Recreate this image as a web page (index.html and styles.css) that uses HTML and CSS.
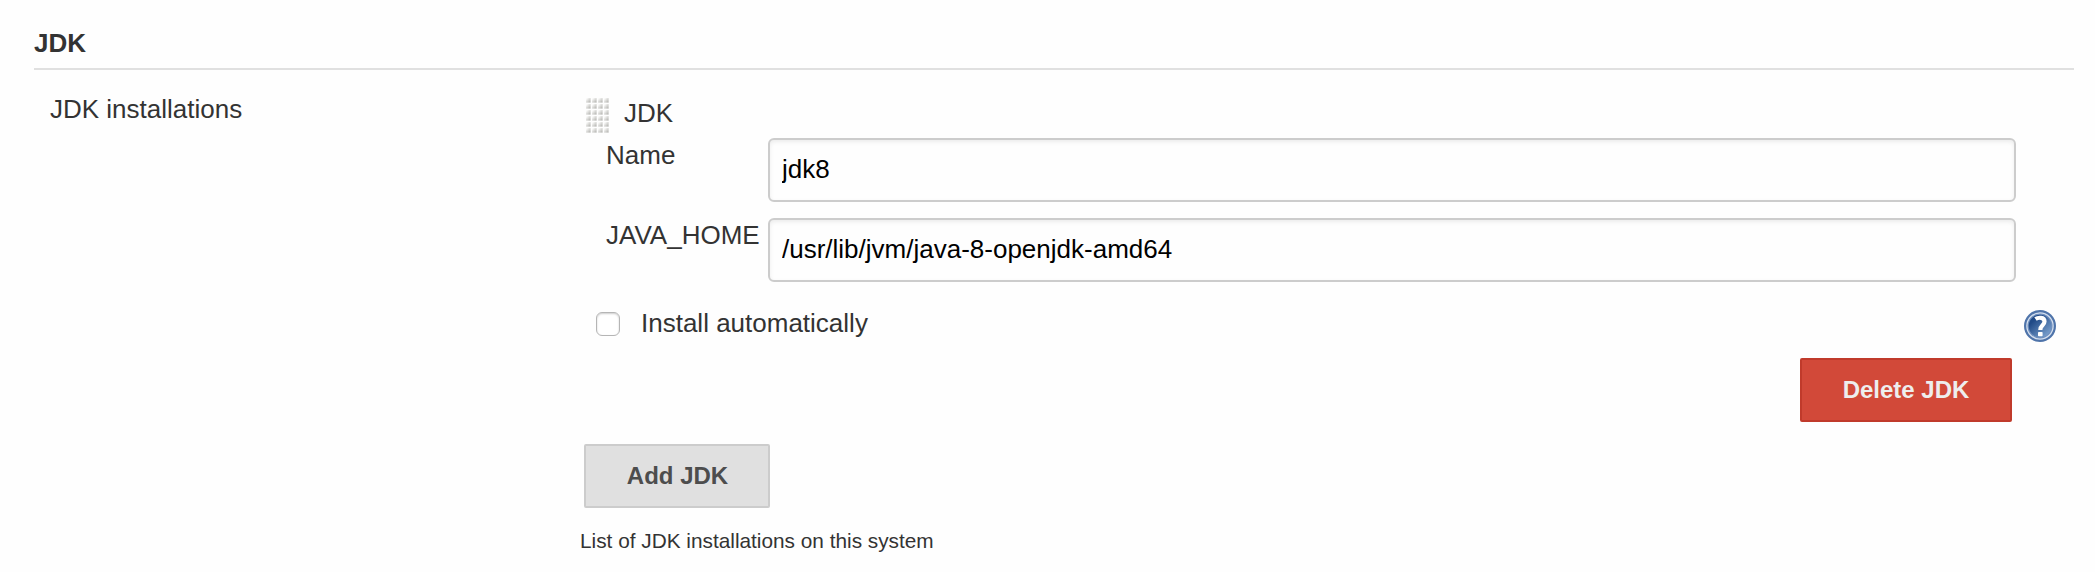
FILE: index.html
```html
<!DOCTYPE html>
<html lang="en">
<head>
<meta charset="utf-8">
<title>JDK</title>
<link rel="stylesheet" href="styles.css">
</head>
<body>
<main class="section">
  <h1 class="section-title">JDK</h1>
  <div class="section-body">
    <div class="section-label">JDK installations</div>
    <div class="installations">
      <div class="item-header">
        <svg class="drag-handle" width="24" height="36" viewBox="0 0 24 36">
          <defs>
            <linearGradient id="grain" x1="0" y1="0" x2="1" y2="1">
              <stop offset="0.15" stop-color="#fafaf9"/>
              <stop offset="1" stop-color="#adada9"/>
            </linearGradient>
            <pattern id="dots" width="6" height="6" patternUnits="userSpaceOnUse">
              <path d="M0 0H4.600V4.600H0Z" fill="url(#grain)"/>
            </pattern>
          </defs>
          <rect width="24" height="36" fill="url(#dots)"/>
        </svg>
        <span>JDK</span>
      </div>
      <div class="field">
        <label class="field-label" for="name">Name</label>
        <input class="field-input" id="name" type="text" value="jdk8">
      </div>
      <div class="field">
        <label class="field-label" for="home">JAVA_HOME</label>
        <input class="field-input" id="home" type="text" value="/usr/lib/jvm/java-8-openjdk-amd64" spellcheck="false">
      </div>
      <div class="option">
        <input class="checkbox" id="auto" type="checkbox">
        <label class="option-label" for="auto">Install automatically</label>
        <svg class="help" width="32" height="32" viewBox="0 0 32 32">
          <defs>
            <linearGradient id="disc" x1="0.1" y1="0.1" x2="0.85" y2="0.9">
              <stop offset="0.2" stop-color="#204a87"/>
              <stop offset="1" stop-color="#7ba1ce"/>
            </linearGradient>
          </defs>
          <circle cx="16" cy="16" r="14.900" fill="#d3deed" stroke="#4f74aa" stroke-width="2.200"/>
          <circle cx="16" cy="16" r="11.900" fill="url(#disc)" stroke="#6f8fbe" stroke-width="1.200"/>
          <path d="M11.500 9C14 7.300 20.500 6.700 20.500 11.500C20.500 15.500 16.300 15.200 16.300 20" fill="none" stroke="#fff" stroke-width="4.200"/>
          <rect x="14" y="22" width="4.600" height="4.200" rx="0.700" fill="#fff"/>
        </svg>
      </div>
      <div class="delete-row"><button class="button button-danger" type="button">Delete JDK</button></div>
      <button class="button button-add" type="button">Add JDK</button>
      <p class="hint">List of JDK installations on this system</p>
    </div>
  </div>
</main>
</body>
</html>
```
FILE: styles.css
```css
* {
  box-sizing: border-box;
}

body {
  margin: 0;
  background: #fefefe;
  color: #333;
  font: 26px/30px "Liberation Sans", Arial, sans-serif;
}

.section {
  padding: 28px 21px 0 34px;
}

.section-title {
  height: 42px;
  margin: 0;
  border-bottom: 2px solid #e0e0e0;
  font-size: 26px;
  line-height: 30px;
  font-weight: bold;
}

.section-body {
  display: grid;
  grid-template-columns: 530px 1fr;
  padding: 24px 0 0 16px;
}

.installations {
  display: flex;
  flex-direction: column;
  align-items: flex-start;
}

.item-header {
  display: flex;
  gap: 14px;
  height: 44px;
  padding: 4px 0 0 6px;
}

.drag-handle {
  display: block;
}

.field {
  display: grid;
  grid-template-columns: 162px 1248px;
  height: 80px;
  padding-left: 26px;
}

.field-label {
  padding-top: 2px;
}

.field-input {
  width: 1248px;
  height: 64px;
  padding: 0 12px 2px;
  border: 2px solid #ccc;
  border-radius: 6px;
  background: #fefefe;
  box-shadow: inset 0 2px 4px rgba(0, 0, 0, 0.075);
  color: #000;
  font: inherit;
}

.option {
  display: flex;
  width: 1476px;
  height: 60px;
  padding: 10px 0 0 16px;
}

.checkbox {
  appearance: none;
  width: 24px;
  height: 24px;
  margin: 4px 21px 0 0;
  border: 1px solid #b5b5b5;
  border-radius: 6px;
  background: #fff;
  box-shadow: inset 0 1px 2px rgba(0, 0, 0, 0.2);
}

.help {
  display: block;
  margin: 2px 0 0 auto;
}

.delete-row {
  display: flex;
  justify-content: flex-end;
  width: 1432px;
  height: 86px;
}

.button {
  height: 64px;
  padding: 0;
  border: 2px solid;
  border-radius: 2px;
  font: bold 24px/28px "Liberation Sans", Arial, sans-serif;
}

.button-danger {
  width: 212px;
  border-color: #c03a2b;
  background: #d24939;
  color: #eee;
}

.button-add {
  width: 186px;
  margin-left: 4px;
  padding-left: 1px;
  border-color: #ccc;
  background: #e0e0e0;
  color: #4d4d4d;
}

.hint {
  margin: 21px 0 0;
  font-size: 20.8px;
  line-height: 24px;
}
```
